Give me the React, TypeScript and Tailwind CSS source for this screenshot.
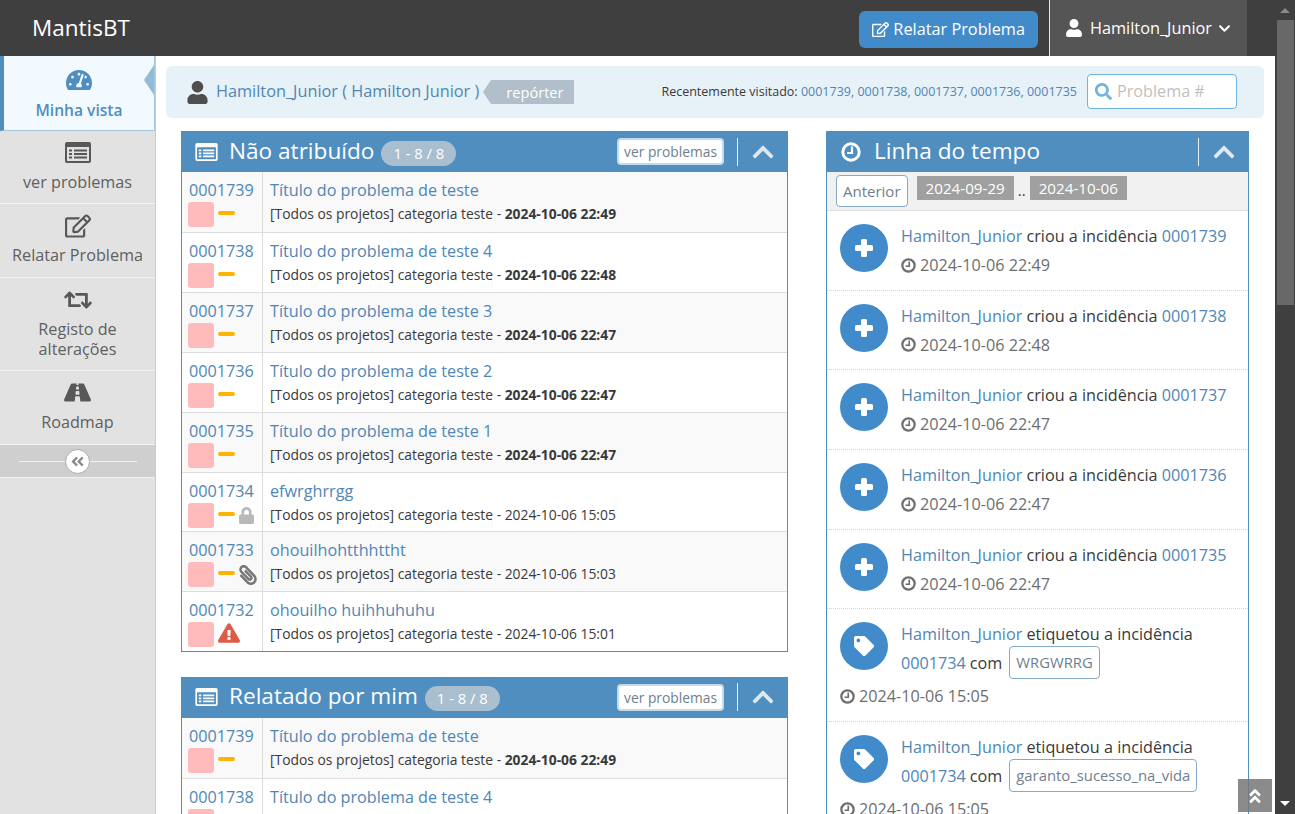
import type { ReactNode } from 'react'
import {
  FaAngleDoubleLeft,
  FaAngleDoubleUp,
  FaChevronDown,
  FaChevronUp,
  FaExclamationTriangle,
  FaLock,
  FaPaperclip,
  FaRegEdit,
  FaRetweet,
  FaRoad,
  FaSearch,
  FaTachometerAlt,
  FaTag,
  FaUser,
} from 'react-icons/fa'

type Issue = { id: string; title: string; date: string; recent?: boolean; extra?: 'lock' | 'clip' | 'warn' }

const ISSUES: Issue[] = [
  { id: '0001739', title: 'Título do problema de teste', date: '2024-10-06 22:49', recent: true },
  { id: '0001738', title: 'Título do problema de teste 4', date: '2024-10-06 22:48', recent: true },
  { id: '0001737', title: 'Título do problema de teste 3', date: '2024-10-06 22:47', recent: true },
  { id: '0001736', title: 'Título do problema de teste 2', date: '2024-10-06 22:47', recent: true },
  { id: '0001735', title: 'Título do problema de teste 1', date: '2024-10-06 22:47', recent: true },
  { id: '0001734', title: 'efwrghrrgg', date: '2024-10-06 15:05', extra: 'lock' },
  { id: '0001733', title: 'ohouilhohtthhttht', date: '2024-10-06 15:03', extra: 'clip' },
  { id: '0001732', title: 'ohouilho huihhuhuhu', date: '2024-10-06 15:01', extra: 'warn' },
]

// font awesome 4 list-alt, the packaged regular one is too thin
function ListAlt({ w, h }: { w: number; h: number }) {
  return (
    <svg width={w} height={h} viewBox="0 0 26 21" fill="currentColor">
      <path
        fillRule="evenodd"
        d="M2 0h22a2 2 0 0 1 2 2v17a2 2 0 0 1-2 2H2a2 2 0 0 1-2-2V2a2 2 0 0 1 2-2zM2 5v13.500a.5.5 0 0 0 .5.5h21a.5.5 0 0 0 .5-.5V5z"
      />
      <path d="M4 7.500h3v2H4zM9 7.500h13v2H9zM4 11h3v2H4zM9 11h13v2H9zM4 14.500h3v2H4zM9 14.500h13v2H9z" />
    </svg>
  )
}

function ClockO({ size }: { size: number }) {
  return (
    <svg width={size} height={size} viewBox="0 0 20 20" fill="none" stroke="currentColor" className="shrink-0">
      <circle cx="10" cy="10" r="8.200" strokeWidth="3" />
      <path d="M11 4.500V11H6" strokeWidth="2.200" />
    </svg>
  )
}

function PlusIcon() {
  return (
    <svg width="20" height="20" viewBox="0 0 20 20" fill="currentColor">
      <rect x="7" y="1" width="6" height="18" rx="1.500" />
      <rect x="1" y="7" width="18" height="6" rx="1.500" />
    </svg>
  )
}

const NAV = [
  { label: 'ver problemas', icon: <ListAlt w={26} h={21} />, h: 'h-[73px]' },
  { label: 'Relatar Problema', icon: <FaRegEdit size={26} />, h: 'h-[74px]' },
  { label: 'Registo de alterações', icon: <FaRetweet size={28} />, h: 'h-[93px]' },
  { label: 'Roadmap', icon: <FaRoad size={27} />, h: 'h-[74px]' },
]

function Sidebar() {
  return (
    <aside className="w-[156px] shrink-0 self-stretch border-r border-[#c9c9c9] bg-[#e2e2e2]">
      <div className="relative flex h-[75px] flex-col items-center border-b border-[#a3c5dd] border-l-[4px] border-l-[#4f8ebf] border-r border-r-[#a3c5dd] bg-[#f3faff] pt-[11px] text-[#4f8ebf]">
        <FaTachometerAlt size={26} />
        <span className="mt-[6px] text-[15.6px] leading-[22px] font-semibold">Minha vista</span>
        <span className="absolute top-[9px] right-0 h-0 w-0 border-y-[15px] border-r-[10px] border-y-transparent border-r-[#92bbd9]" />
      </div>
      {NAV.map((n) => (
        <div key={n.label} className={`${n.h} flex flex-col items-center border-b border-[#f2f2f2] pt-[8px] text-[#5f5f5f]`}>
          <span className="flex h-[27px] items-center text-[#585858]">{n.icon}</span>
          <span className="mt-[6px] w-[150px] text-center text-[16.2px] leading-[20px]">{n.label}</span>
        </div>
      ))}
      <div className="relative flex h-[33px] items-center justify-center border-b border-[#f2f2f2] bg-[#cfcfcf]">
        <span className="h-px w-[118px] bg-[#f2f2f2]" />
        <span className="absolute flex h-[25px] w-[25px] items-center justify-center rounded-full border border-[#aaa] bg-white text-[#8a8a8a]">
          <FaAngleDoubleLeft size={15} />
        </span>
      </div>
    </aside>
  )
}

function PanelHeader({ icon, title, count, action }: { icon: ReactNode; title: string; count?: string; action?: boolean }) {
  return (
    <div className="flex h-[41px] shrink-0 items-center bg-[#4f8ebf] pl-[13px] text-white">
      <span className="flex w-[24px] justify-center">{icon}</span>
      <span className="ml-[11px] -mt-[2px] text-[22.6px] leading-[40px]">{title}</span>
      {count && (
        <span className="ml-[7px] mt-[3px] rounded-full bg-[#a9bfd0] px-[12px] text-[14.8px] leading-[25px]">{count}</span>
      )}
      <div className="ml-auto flex items-center">
        {action && (
          <span className="rounded-[4px] border-2 border-[#c5d9e8] bg-white px-[5px] text-[13.8px] leading-[23px] text-[#6e7f8d]">ver problemas</span>
        )}
        <span className="ml-[13px] h-[28px] w-px bg-[#e7f0f6]" />
        <span className="flex w-[50px] justify-center text-[#dce7ef]">
          <FaChevronUp size={24} />
        </span>
      </div>
    </div>
  )
}

function IssueRow({ issue, index }: { issue: Issue; index: number }) {
  const height = index === 0 ? 'h-[61px]' : issue.recent ? 'h-[60px]' : 'h-[59.33px]'
  return (
    <div className={`flex ${height} border-b border-[#dddddd] last:border-b-0 ${index % 2 === 0 ? 'bg-[#f9f9f9]' : 'bg-white'}`}>
      <div className="w-[81px] shrink-0 border-r border-[#dddddd] pl-[7px] pt-[6px]">
        <div className="text-[16.2px] leading-[24px] text-[#4f86b5]">{issue.id}</div>
        <div className="-ml-[1px] flex items-center">
          <span className="h-[25px] w-[26px] rounded-[3px] bg-[#ffbbbb]" />
          {issue.extra !== 'warn' && <span className="mb-[3px] ml-[4px] h-[4px] w-[17px] rounded-full bg-[#fdb400]" />}
          {issue.extra === 'lock' && <FaLock size={17} className="ml-[3px] text-[#b9b9b9]" />}
          {issue.extra === 'clip' && <FaPaperclip size={20} className="ml-[3px] -scale-x-100 text-[#777]" />}
          {issue.extra === 'warn' && <FaExclamationTriangle size={22} className="mb-[2px] ml-[4px] text-[#df5b46]" />}
        </div>
      </div>
      <div className="pl-[7px] pt-[6px]">
        <div className="text-[16.2px] leading-[24px] text-[#4f86b5]">{issue.title}</div>
        <div className="mt-[2px] text-[13.85px] leading-[20px] text-[#393939]">
          [Todos os projetos] categoria teste - {issue.recent ? <b className="font-bold">{issue.date}</b> : issue.date}
        </div>
      </div>
    </div>
  )
}

function IssuePanel({ title }: { title: string }) {
  return (
    <section className="flex flex-col">
      <PanelHeader icon={<ListAlt w={23} h={18} />} title={title} count="1 - 8 / 8" action />
      <div className="border border-t-0 border-[#4f8ebf]">
        {ISSUES.map((issue, i) => (
          <IssueRow key={issue.id} issue={issue} index={i} />
        ))}
      </div>
    </section>
  )
}

function Avatar({ icon }: { icon: ReactNode }) {
  return <span className="flex h-[48px] w-[48px] shrink-0 items-center justify-center rounded-full bg-[#428bca] text-white">{icon}</span>
}

function Stamp({ date, className }: { date: string; className: string }) {
  return (
    <div className={`${className} flex items-center gap-[4px] text-[16.2px] leading-[24px] text-[#6e6e6e]`}>
      <ClockO size={15} />
      {date}
    </div>
  )
}

function CreatedRow({ issue }: { issue: Issue }) {
  return (
    <div className="flex h-[79.7px] border-b border-dotted border-[#d5d5d5] pl-[13px] pt-[13px]">
      <Avatar icon={<PlusIcon />} />
      <div className="ml-[13px]">
        <div className="whitespace-nowrap text-[16.2px] leading-[24px] text-[#393939]">
          <span className="text-[#4f86b5]">Hamilton_Junior</span> criou a incidência <span className="text-[#4f86b5]">{issue.id}</span>
        </div>
        <Stamp date={issue.date} className="mt-[5px]" />
      </div>
    </div>
  )
}

function TaggedRow({ tag }: { tag: string }) {
  return (
    <div className="h-[113px] border-b border-dotted border-[#d5d5d5] pl-[13px] pt-[13px]">
      <div className="flex">
        <Avatar icon={<FaTag size={20} />} />
        <div className="ml-[13px] text-[16.2px] leading-[24px] text-[#393939]">
          <div><span className="text-[#4f86b5]">Hamilton_Junior</span> etiquetou a incidência</div>
          <div className="flex items-center">
            <span className="text-[#4f86b5]">0001734</span>
            <span className="ml-[4px]">com</span>
            <span className="ml-[7px] rounded-[4px] border border-[#84a9c9] bg-white px-[6px] text-[14.85px] leading-[31px] text-[#6e7f8d]">{tag}</span>
          </div>
        </div>
      </div>
      <Stamp date="2024-10-06 15:05" className="mt-[5px]" />
    </div>
  )
}

function TimelinePanel() {
  return (
    <section className="flex w-[423px] shrink-0 flex-col">
      <PanelHeader icon={<ClockO size={20} />} title="Linha do tempo" />
      <div className="border border-t-0 border-[#4f8ebf]">
        <div className="flex h-[39px] items-start border-b border-[#dddddd] bg-[#f1f1f1] pl-[9px] pt-[3px]">
          <span className="rounded-[4px] border border-[#84a9c9] bg-white px-[6px] text-[15px] leading-[30px] text-[#6e7f8d]">Anterior</span>
          <span className="ml-[9px] mt-[1px] bg-[#a0a0a0] px-[9px] text-[15.2px] leading-[24px] text-white">2024-09-29</span>
          <span className="mx-[4px] mt-[3px] text-[15px] leading-[24px] text-[#393939]">..</span>
          <span className="mt-[1px] bg-[#a0a0a0] px-[9px] text-[15.2px] leading-[24px] text-white">2024-10-06</span>
        </div>
        {ISSUES.slice(0, 5).map((issue) => (
          <CreatedRow key={issue.id} issue={issue} />
        ))}
        <TaggedRow tag="WRGWRRG" />
        <TaggedRow tag="garanto_sucesso_na_vida" />
      </div>
    </section>
  )
}

function Breadcrumb() {
  return (
    <div className="flex h-[52px] items-center rounded-[6px] bg-[#e7f1f8] pl-[20px] pr-[27px]">
      <FaUser size={23} className="text-[#4e4e4e]" />
      <span className="ml-[7px] -mt-[2px] text-[16.3px] text-[#4f86b5]">Hamilton_Junior ( Hamilton Junior )</span>
      <span className="relative ml-[12px] bg-[#b0bfc9] pl-[15px] pr-[10px] text-[14.6px] leading-[24px] text-white">
        repórter
        <span className="absolute top-0 -left-[8px] h-0 w-0 border-y-[12px] border-r-[8px] border-y-transparent border-r-[#b0bfc9]" />
      </span>
      <span className="ml-auto text-[12.5px] text-[#393939]">
        Recentemente visitado: <span className="text-[#4f86b5]">0001739, 0001738, 0001737, 0001736, 0001735</span>
      </span>
      <div className="ml-[10px] -mt-[2px] flex h-[35px] w-[150px] items-center rounded-[4px] border border-[#6fb3e0] bg-white pl-[7px]">
        <FaSearch size={17} className="text-[#6fb3e0]" />
        <span className="ml-[5px] text-[16.2px] text-[#bfbfbf]">Problema #</span>
      </div>
    </div>
  )
}

export default function App() {
  return (
    <div className="relative flex h-[814px] w-[1295px] overflow-hidden bg-white font-['Open_Sans',sans-serif]">
      <div className="flex w-[1275px] flex-col">
        <header className="flex h-[56px] shrink-0 items-center bg-[#3f3f3f] pl-[32px] pr-[28px] text-white">
          <span className="text-[22.500px]">MantisBT</span>
          <span className="ml-auto mt-[2px] flex h-[37px] items-center rounded-[6px] bg-[#428bca] px-[13px] text-[16.3px]">
            <FaRegEdit size={17} className="mr-[4px]" />
            Relatar Problema
          </span>
          <div className="ml-[11px] flex h-[56px] w-[198px] items-center border-l border-[#e6e6e6] bg-[#555555] pl-[15px]">
            <FaUser size={18} />
            <span className="ml-[7px] text-[16.3px]">Hamilton_Junior</span>
            <FaChevronDown size={13} className="ml-[6px]" />
          </div>
        </header>
        <div className="flex min-h-0 flex-1 items-start">
          <Sidebar />
          <main className="min-w-0 flex-1 pl-[10px] pr-[11px] pt-[10px]">
            <Breadcrumb />
            <div className="mt-[13px] flex justify-between pl-[15px] pr-[15px]">
              <div className="flex w-[607px] shrink-0 flex-col gap-[25px]">
                <IssuePanel title="Não atribuído" />
                <IssuePanel title="Relatado por mim" />
              </div>
              <TimelinePanel />
            </div>
          </main>
        </div>
      </div>
      <div className="flex w-[20px] shrink-0 flex-col items-center bg-[#3f3f3f]">
        <span className="mt-[8px] h-0 w-0 border-x-[5px] border-b-[5px] border-x-transparent border-b-[#8a8a8a]" />
        <span className="mt-[7px] h-[285px] w-[17px] bg-[#686868]" />
        <span className="mt-auto mb-[8px] h-0 w-0 border-x-[5px] border-t-[5px] border-x-transparent border-t-white" />
      </div>
      <span className="absolute top-[779px] left-[1238px] flex h-[33px] w-[34px] items-center justify-center bg-[#777777]/85 text-white">
        <FaAngleDoubleUp size={18} />
      </span>
    </div>
  )
}
